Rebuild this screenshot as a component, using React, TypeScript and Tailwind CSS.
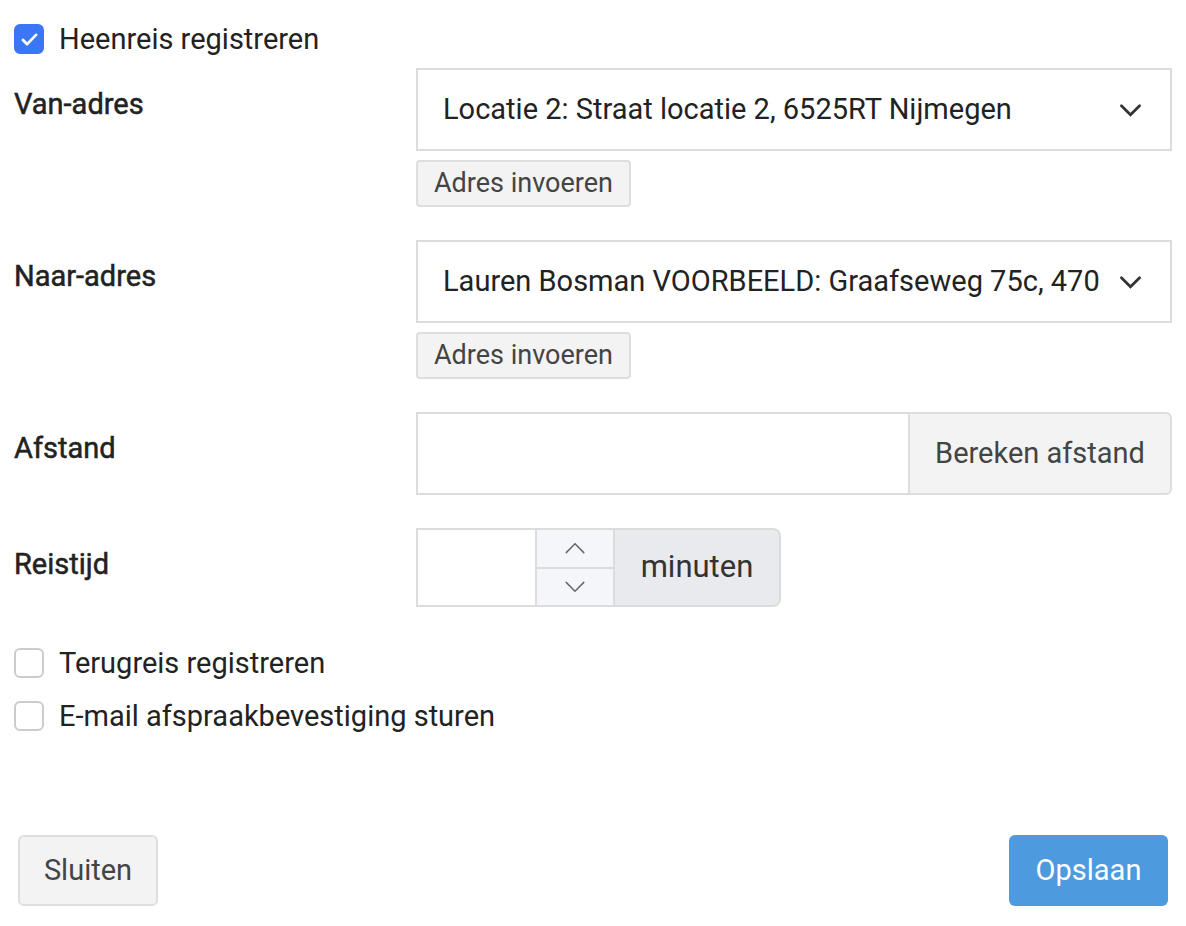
import { useState } from 'react';

function Caret({ up = false, className, stroke }: { up?: boolean; className?: string; stroke: number }) {
  return (
    <svg viewBox="0 0 22 13" className={className} fill="none" stroke="currentColor" strokeWidth={stroke} strokeLinecap="round" strokeLinejoin="miter">
      <path d={up ? 'M1.5 11.5L11 2l9.5 9.5' : 'M1.5 1.5L11 11l9.5-9.5'} />
    </svg>
  );
}

function Check({ checked, onChange, label }: { checked: boolean; onChange: () => void; label: string }) {
  return (
    <label className="flex h-[30px] items-center gap-[15px] cursor-pointer" onClick={onChange}>
      <span
        className={`flex h-[30px] w-[30px] shrink-0 items-center justify-center rounded-[6px] border-2 ${
          checked ? 'border-[#3b76f6] bg-[#3b76f6]' : 'border-[#cccccc] bg-white'
        }`}
      >
        {checked && (
          <svg viewBox="0 0 18 14" className="h-[13px] w-[17px]" fill="none" stroke="white" strokeWidth="3" strokeLinecap="round" strokeLinejoin="round">
            <path d="M2 7.5l4.5 4.5L16 2" />
          </svg>
        )}
      </span>
      <span className="whitespace-nowrap text-[29px] leading-none text-[#222]">{label}</span>
    </label>
  );
}

function FieldLabel({ children }: { children: string }) {
  return (
    <div className="pt-[19px] text-[29px] leading-[1.2] text-[#222] [-webkit-text-stroke:0.5px_#222]">{children}</div>
  );
}

function AddressSelect({ value }: { value: string }) {
  return (
    <div className="flex min-w-0 flex-col items-start gap-[9px]">
      <div className="flex h-[83px] w-full items-center border-2 border-[#dcdcdc] bg-white pl-[25px] pr-[29px]">
        <span className="min-w-0 flex-1 overflow-hidden whitespace-nowrap text-[29px] text-[#222]">{value}</span>
        <Caret className="ml-[18px] mt-[1px] h-[13px] w-[21px] shrink-0 text-[#333]" stroke={2.8} />
      </div>
      <button className="h-[47px] rounded-[4px] border-2 border-[#dedede] bg-[#f3f3f3] px-[16px] text-[27px] leading-none text-[#444]">
        Adres invoeren
      </button>
    </div>
  );
}

export default function App() {
  const [outbound, setOutbound] = useState(true);
  const [inbound, setInbound] = useState(false);
  const [mail, setMail] = useState(false);

  return (
    <div className="h-[926px] w-[1186px] overflow-hidden bg-white px-[14px] pt-[24px] font-['Roboto',sans-serif]">
      <Check checked={outbound} onChange={() => setOutbound(!outbound)} label="Heenreis registreren" />

      <div className="mt-[14px] grid grid-cols-[402px_minmax(0,1fr)] gap-y-[33px]">
        <FieldLabel>Van-adres</FieldLabel>
        <AddressSelect value="Locatie 2: Straat locatie 2, 6525RT Nijmegen" />

        <FieldLabel>Naar-adres</FieldLabel>
        <AddressSelect value="Lauren Bosman VOORBEELD: Graafseweg 75c, 4701AB Nijmegen" />

        <FieldLabel>Afstand</FieldLabel>
        <div className="flex h-[83px]">
          <input className="w-[492px] border-2 border-r-0 border-[#dcdcdc] outline-none" />
          <button className="flex-1 rounded-r-[6px] border-2 border-[#dedede] bg-[#f3f3f3] text-[29px] text-[#444]">
            Bereken afstand
          </button>
        </div>

        <FieldLabel>Reistijd</FieldLabel>
        <div className="flex h-[79px]">
          <input className="w-[119px] border-2 border-r-0 border-[#dcdcdc] outline-none" />
          <div className="flex w-[80px] flex-col border-2 border-[#dcdcdc] bg-[#f5f6f9]">
            <div className="flex flex-1 items-center justify-center border-b-2 border-[#dcdcdc]">
              <Caret up className="h-[12px] w-[22px] text-[#666]" stroke={1.6} />
            </div>
            <div className="flex flex-1 items-center justify-center">
              <Caret className="h-[12px] w-[22px] text-[#666]" stroke={1.6} />
            </div>
          </div>
          <div className="flex w-[166px] items-center justify-center rounded-r-[8px] border-2 border-l-0 border-[#dcdcdc] bg-[#e9eaed] text-[31px] text-[#333]">
            minuten
          </div>
        </div>
      </div>

      <div className="mt-[41px] flex flex-col gap-[23px]">
        <Check checked={inbound} onChange={() => setInbound(!inbound)} label="Terugreis registreren" />
        <Check checked={mail} onChange={() => setMail(!mail)} label="E-mail afspraakbevestiging sturen" />
      </div>

      <div className="mt-[104px] flex justify-between pl-[4px] pr-[4px]">
        <button className="h-[71px] w-[140px] rounded-[6px] border-2 border-[#dedede] bg-[#f3f3f3] text-[29px] text-[#444]">
          Sluiten
        </button>
        <button className="h-[71px] w-[159px] rounded-[6px] bg-[#4d9ade] text-[29px] text-white">
          Opslaan
        </button>
      </div>
    </div>
  );
}
